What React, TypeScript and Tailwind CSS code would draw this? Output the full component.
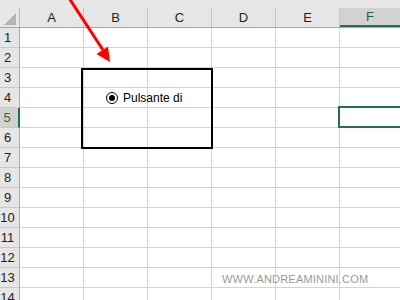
import React from 'react';

const cols = ['A', 'B', 'C', 'D', 'E'];
const rows = Array.from({ length: 14 }, (_, i) => i + 1);

export default function App() {
  return (
    <div
      className="relative w-[400px] h-[300px] overflow-hidden bg-white"
      style={{ fontFamily: '"Liberation Sans", Arial, sans-serif' }}
    >
      {/* strip above the column headers */}
      <div className="h-[8px] bg-[#e6e6e6]" />

      {/* column headers */}
      <div className="flex h-[20px] bg-[#e6e6e6] border-b border-[#a6a6a6]">
        <div className="relative w-[20px] shrink-0 border-r border-[#b8b8b8]">
          <div className="absolute right-[3px] bottom-[2px] w-0 h-0 border-l-[12px] border-l-transparent border-b-[12px] border-b-[#b4b4b4]" />
        </div>
        {cols.map((c) => (
          <div
            key={c}
            className="w-[64px] shrink-0 border-r border-[#c4c4c4] flex items-center justify-center text-[13px] text-[#222]"
          >
            {c}
          </div>
        ))}
        <div className="flex-1 bg-[#d2d2d2] border-b-2 border-[#217346] flex items-center justify-center text-[13px] text-[#2d5a3d]">
          F
        </div>
      </div>

      {/* rows */}
      {rows.map((r) => {
        const sel = r === 5;
        return (
          <div key={r} className="flex h-[20px]">
            <div
              className={
                sel
                  ? 'w-[20px] shrink-0 bg-[#d2d2d2] border-r-2 border-r-[#217346] border-b border-b-[#c8c8c8] flex items-center justify-center pr-[4px] text-[13px] text-[#217346]'
                  : 'w-[20px] shrink-0 bg-[#e6e6e6] border-r border-r-[#ababab] border-b border-b-[#c8c8c8] flex items-center justify-center pr-[4px] text-[13px] text-[#222]'
              }
            >
              {r}
            </div>
            {cols.map((c) => (
              <div key={c} className="w-[64px] shrink-0 border-r border-b border-[#d4d4d4]" />
            ))}
            <div className="flex-1 border-b border-[#d4d4d4]" />
          </div>
        );
      })}

      {/* group box with option button */}
      <div className="absolute left-[81px] top-[68px] w-[132px] h-[81px] border-2 border-black" />
      <div className="absolute left-[106px] top-[91px] flex items-center gap-[5px]">
        <div className="w-[12px] h-[12px] rounded-full border border-black bg-white flex items-center justify-center">
          <div className="w-[6px] h-[6px] rounded-full bg-black" />
        </div>
        <span className="text-[12px] leading-[14px] text-black">Pulsante di</span>
      </div>

      {/* active cell F5 */}
      <div className="absolute left-[338px] top-[106px] w-[80px] h-[22px] border-2 border-[#217346]" />

      {/* red arrow */}
      <svg className="absolute left-0 top-0" width="400" height="300" viewBox="0 0 400 300">
        <line x1="69" y1="-2" x2="103" y2="50" stroke="#ff0000" strokeWidth="3" />
        <polygon points="110,62 96.5,54 108,46.5" fill="#ff0000" />
      </svg>

      {/* watermark */}
      <div className="absolute left-[222px] top-[271px] text-[11px] tracking-[0.2px] text-[#9a9a9a]">
        WWW.ANDREAMININI.COM
      </div>
    </div>
  );
}
